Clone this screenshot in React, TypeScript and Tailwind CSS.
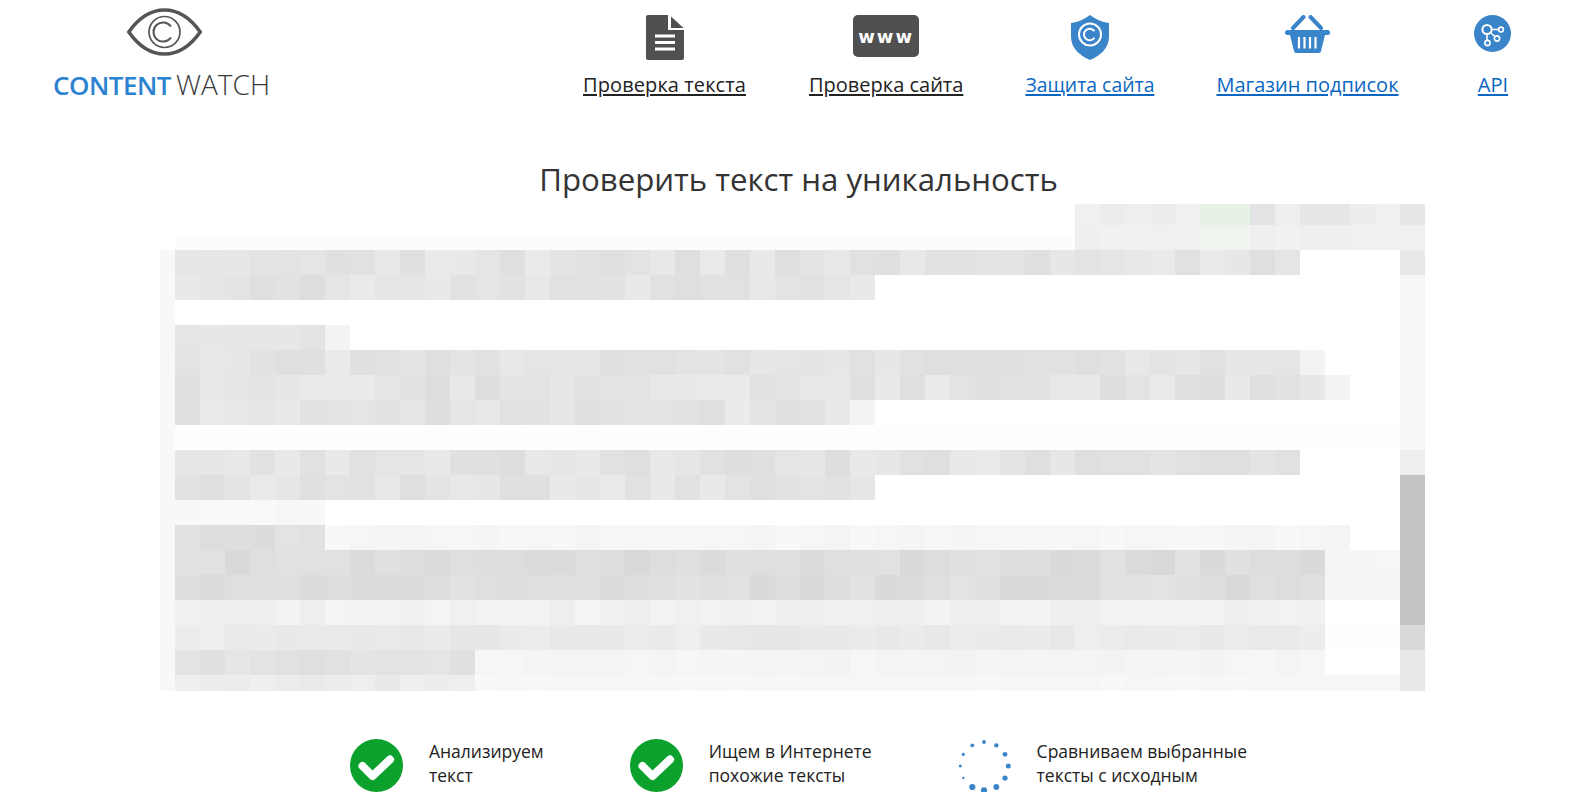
import React from "react";

const BLUE = "#3a84c9";
const DARK = "#505050";

type Seg = [number, number, number];
type Row = { h: number; left: string; segs: Seg[]; sb: string; tiles?: Record<number, string> };

const W = "#ffffff";
const topA: Record<number, string> = {
  36: "#f0f0f0", 37: "#ececec", 38: "#eeeeee", 39: "#ececec", 40: "#f0f0f0", 41: "#e6f2e6", 42: "#e6f2e6",
  43: "#e3e3e3", 44: "#efefef", 45: "#e7e7e7", 46: "#e7e7e7", 47: "#ededed", 48: "#f0f0f0",
};
const topB: Record<number, string> = {
  36: "#efefef", 37: "#f1f1f1", 38: "#f1f1f1", 39: "#f0f0f0", 40: "#f0f0f0", 41: "#edf5ed", 42: "#eef4ee",
  43: "#efefef", 44: "#f1f1f1", 45: "#eef0ee", 46: "#efefef", 47: "#f0f0f0", 48: "#f0f0f0",
};
const rows: Row[] = [
  { h: 21, left: W, segs: [[36, 255, 0], [13, 236, 5]], sb: "#e7e7e7", tiles: topA },
  { h: 11, left: W, segs: [[36, 255, 0], [13, 239, 2]], sb: "#f0f0f0", tiles: topB },
  { h: 14, left: W, segs: [[36, 252, 0], [13, 239, 2]], sb: "#f0f0f0", tiles: topB },
  { h: 25, left: "#f8f8f8", segs: [[45, 228, 6], [4, 255, 0]], sb: "#e8e8e8" },
  { h: 25, left: "#f8f8f8", segs: [[28, 228, 6], [21, 255, 0]], sb: "#f7f7f7" },
  { h: 25, left: "#f8f8f8", segs: [[49, 255, 0]], sb: "#f7f7f7" },
  { h: 25, left: "#f8f8f8", segs: [[6, 229, 2], [1, 243, 0], [42, 255, 0]], sb: "#f7f7f7" },
  { h: 25, left: "#f8f8f8", segs: [[45, 228, 6], [1, 243, 0], [3, 255, 0]], sb: "#f7f7f7" },
  { h: 25, left: "#f8f8f8", segs: [[46, 228, 7], [1, 243, 0], [2, 255, 0]], sb: "#f7f7f7" },
  { h: 25, left: "#f8f8f8", segs: [[27, 228, 7], [1, 243, 0], [21, 255, 0]], sb: "#f7f7f7" },
  { h: 25, left: "#f8f8f8", segs: [[49, 254, 0]], sb: "#f7f7f7" },
  { h: 25, left: "#f8f8f8", segs: [[45, 228, 6], [4, 255, 0]], sb: "#eeeeee" },
  { h: 25, left: "#f8f8f8", segs: [[28, 228, 6], [21, 255, 0]], sb: "#c4c4c4" },
  { h: 25, left: "#f8f8f8", segs: [[6, 248, 1], [43, 255, 0]], sb: "#c4c4c4" },
  { h: 25, left: "#f8f8f8", segs: [[6, 224, 4], [41, 246, 2], [2, 255, 0]], sb: "#c4c4c4" },
  { h: 25, left: "#f8f8f8", segs: [[46, 222, 5], [3, 245, 1]], sb: "#c4c4c4" },
  { h: 25, left: "#f8f8f8", segs: [[46, 222, 5], [3, 245, 1]], sb: "#c4c4c4" },
  { h: 25, left: "#f8f8f8", segs: [[46, 241, 3], [3, 255, 0]], sb: "#c4c4c4" },
  { h: 25, left: "#f8f8f8", segs: [[46, 234, 4], [3, 254, 0]], sb: "#d9d9d9" },
  { h: 25, left: "#f8f8f8", segs: [[12, 226, 4], [34, 245, 2], [3, 255, 0]], sb: "#e8e8e8" },
  { h: 16, left: "#f8f8f8", segs: [[12, 236, 3], [37, 247, 1]], sb: "#e8e8e8" },
];

function noise(r: number, c: number) {
  const x = Math.sin(r * 127.1 + c * 311.7) * 43758.5453;
  return x - Math.floor(x);
}

function gray(v: number) {
  const n = Math.max(0, Math.min(255, Math.round(v)));
  return `rgb(${n},${n},${n})`;
}

function Mosaic() {
  return (
    <div className="ml-[132px] mt-[3px] flex w-[1265px] flex-col">
      {rows.map((row, r) => {
        let c = -1;
        return (
          <div key={r} className="flex" style={{ height: row.h }}>
            <div className="w-[15px] shrink-0" style={{ background: row.left }} />
            {row.segs.flatMap(([count, base, jit]) =>
              Array.from({ length: count }, () => {
                c += 1;
                const v = base + (noise(r, c) * 2 - 1) * jit;
                return <div key={c} className="w-[25px] shrink-0" style={{ background: row.tiles?.[c] ?? gray(v) }} />;
              })
            )}
            <div className="w-[25px] shrink-0" style={{ background: row.sb }} />
          </div>
        );
      })}
    </div>
  );
}

function DocIcon() {
  return (
    <svg width="38" height="45" viewBox="0 0 38 45">
      <path d="M2 0H22V15H38V43a2 2 0 0 1-2 2H2a2 2 0 0 1-2-2V2a2 2 0 0 1 2-2Z" fill={DARK} />
      <path d="M25 1.5 37.5 13H25Z" fill={DARK} />
      <path d="M9 21H29M9 27.5H29M9 34H29" stroke="#fff" strokeWidth="3" />
    </svg>
  );
}

function ShieldIcon() {
  return (
    <svg width="38" height="45" viewBox="0 0 38 45">
      <path d="M19 0C24 4 31 7 38 8V22C38 33 29 41 19 45C9 41 0 33 0 22V8C7 7 14 4 19 0Z" fill={BLUE} />
      <circle cx="19" cy="19.5" r="11" fill="none" stroke="#fff" strokeWidth="2" />
      <path d="M23.5 16.2A5.8 5.8 0 1 0 23.5 22.8" fill="none" stroke="#fff" strokeWidth="2" />
    </svg>
  );
}

function BasketIcon() {
  return (
    <svg width="45" height="38" viewBox="0 0 45 38">
      <path d="M8 13 18.5 2M36 13 25.5 2" stroke={BLUE} strokeWidth="4" strokeLinecap="round" />
      <rect x="0" y="15" width="45" height="5" rx="2.5" fill={BLUE} />
      <path d="M4.5 18H40.5L36 36a2 2 0 0 1-2 2H11a2 2 0 0 1-2-2Z" fill={BLUE} />
      <path d="M14 22V33.5M19.5 22V33.5M25 22V33.5M30.5 22V33.5" stroke="#fff" strokeWidth="2.2" />
    </svg>
  );
}

function ApiIcon() {
  return (
    <svg width="37" height="37" viewBox="0 0 37 37">
      <circle cx="18.5" cy="18.5" r="18.5" fill={BLUE} />
      <path d="M13 14.5H26M13 14.5 22.5 23M13 14.5V27" stroke="#fff" strokeWidth="1.6" />
      <circle cx="13" cy="14.5" r="4.6" fill={BLUE} stroke="#fff" strokeWidth="2" />
      <circle cx="27" cy="14.5" r="2.4" fill={BLUE} stroke="#fff" strokeWidth="1.6" />
      <circle cx="23" cy="23.5" r="2.6" fill={BLUE} stroke="#fff" strokeWidth="1.6" />
      <circle cx="13.5" cy="28" r="2.6" fill={BLUE} stroke="#fff" strokeWidth="1.6" />
    </svg>
  );
}

function Eye() {
  return (
    <svg width="75" height="48" viewBox="0 0 75 48">
      <path d="M1.8 24C12 9.5 24 2 37.5 2S63 9.5 73.2 24C63 38.5 51 46 37.5 46S12 38.5 1.8 24Z" fill="none" stroke="#555" strokeWidth="3.6" strokeLinejoin="round" />
      <circle cx="37.5" cy="24" r="15.5" fill="none" stroke="#555" strokeWidth="1.7" />
      <path d="M44 18.5A9.6 9.6 0 1 0 44 29.5" fill="none" stroke="#555" strokeWidth="2" />
    </svg>
  );
}

function Check() {
  return (
    <svg width="53" height="53" viewBox="0 0 53 53">
      <circle cx="26.5" cy="26.5" r="26.5" fill="#0ca12c" />
      <path d="M12.5 27 22.5 37 40 20.5" fill="none" stroke="#fff" strokeWidth="8" strokeLinecap="round" strokeLinejoin="round" />
    </svg>
  );
}

const dots: [number, number, number][] = [
  [131, 50, 1.9], [168, 60, 2.2], [194, 87, 2.4], [204, 122, 2.5], [194, 158, 2.6], [168, 185, 2.9],
  [131, 195, 3.1], [96, 185, 3.1], [69, 158, 1.2], [60, 122, 1.5], [69, 87, 1.6], [96, 60, 1.9],
];

function Spinner() {
  return (
    <svg width="53" height="53" viewBox="0 0 53 53">
      {dots.map(([x, y, r], i) => (
        <circle key={i} cx={x / 3 - 17.67} cy={y / 3 - 13.67} r={r} fill={BLUE} />
      ))}
    </svg>
  );
}

function NavItem({ icon, label, dark, className, textClass }: { icon: React.ReactNode; label: string; dark?: boolean; className?: string; textClass?: string }) {
  return (
    <a className={`flex flex-col items-center ${className ?? ""}`}>
      <div className="flex h-[45px] items-start">{icon}</div>
      <span className={`mt-[11px] leading-[28px] underline decoration-[2px] underline-offset-[2px] ${textClass ?? "text-[20px]"} ${dark ? "text-[#222222]" : "text-[#0b67c2]"}`}>{label}</span>
    </a>
  );
}

function Step({ icon, lines }: { icon: React.ReactNode; lines: [string, string] }) {
  return (
    <div className="flex items-start gap-[26px]">
      <div className="h-[53px] w-[53px] shrink-0">{icon}</div>
      <div className="text-[17.5px] leading-[24px] text-[#222222]">
        <div>{lines[0]}</div>
        <div>{lines[1]}</div>
      </div>
    </div>
  );
}

export default function App() {
  return (
    <div className="h-[808px] w-full overflow-hidden bg-white font-['Open_Sans',sans-serif]">
      <header className="flex h-[109px] pt-[15px]">
        <div className="ml-[54px] mt-[-7px] flex w-[215px] flex-col items-start">
          <div className="ml-[73px]">
            <Eye />
          </div>
          <div className="ml-[-1px] mt-[10px] flex items-baseline whitespace-nowrap leading-[36px]">
            <span className="text-[26px] font-semibold tracking-[-0.5px] text-[#2b82d0]">CONTENT</span>
            <span className="ml-[5px] text-[28px] font-light text-[#3a3a3a]">WATCH</span>
          </div>
        </div>
        <nav className="ml-[314px] flex gap-[62px]">
          <NavItem dark textClass="text-[20px] tracking-[0.1px]" icon={<DocIcon />} label="Проверка текста" />
          <NavItem
            dark
            className="ml-[1px]"
            icon={
              <div className="flex h-[42px] w-[66px] items-center justify-center rounded-[5px] bg-[#505050] font-['DejaVu_Sans',sans-serif] text-[18px] font-bold tracking-[2px] text-white">
                www
              </div>
            }
            label="Проверка сайта"
          />
          <NavItem textClass="text-[19.4px]" icon={<ShieldIcon />} label="Защита сайта" />
          <NavItem icon={<BasketIcon />} label="Магазин подписок" />
          <NavItem className="ml-[14px]" icon={<ApiIcon />} label="API" />
        </nav>
      </header>
      <main className="pl-[28px]">
        <h1 className="mt-[48px] text-center text-[31.2px] font-normal leading-[44px] text-[#333333]">Проверить текст на уникальность</h1>
        <Mosaic />
        <div className="mt-[48px] flex justify-center gap-[86px]">
          <Step icon={<Check />} lines={["Анализируем", "текст"]} />
          <Step icon={<Check />} lines={["Ищем в Интернете", "похожие тексты"]} />
          <Step icon={<Spinner />} lines={["Сравниваем выбранные", "тексты с исходным"]} />
        </div>
      </main>
    </div>
  );
}
